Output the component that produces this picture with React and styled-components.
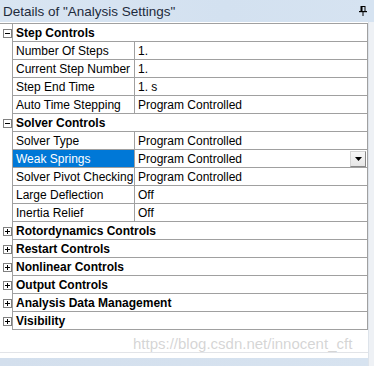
import React from "react";
import styled, { createGlobalStyle } from "styled-components";

const GlobalStyle = createGlobalStyle`
  html, body {
    margin: 0;
    padding: 0;
    background: #ffffff;
  }
  body {
    font-family: "Liberation Sans", Arial, sans-serif;
  }
`;

const Panel = styled.div`
  position: relative;
  width: 374px;
  height: 366px;
  display: flex;
  flex-direction: column;
  background: #ffffff;
  overflow: hidden;
`;

const Header = styled.div`
  height: 22px;
  display: flex;
  align-items: center;
  justify-content: space-between;
  padding: 0 7px 0 3px;
  background: linear-gradient(to right, #d9e5f2, #d3e1f0 60%, #d6e3f1);
  color: #1e2b3c;
  font-size: 13.5px;
  box-sizing: border-box;
`;

const Body = styled.div`
  display: flex;
  flex: 1;
  min-height: 0;
`;

const Main = styled.div`
  flex: 1;
  display: flex;
  flex-direction: column;
`;

const Strip = styled.div`
  width: 5px;
  background: #eef1f5;
  border-left: 1px solid #dde3ea;
`;

const Table = styled.div`
  margin-top: 1px;
  border-top: 1px solid #a0a0a0;
  border-right: 1px solid #a0a0a0;
  display: flex;
  flex-direction: column;
`;

const Row = styled.div`
  display: grid;
  grid-template-columns: 13px ${(p) => (p.$section ? "1fr" : "122px 1fr")};
  height: 18px;
`;

const Gutter = styled.div`
  display: flex;
  align-items: center;
  justify-content: flex-start;
  padding-left: 3px;
  border-right: 1px solid #a0a0a0;
`;

const Box = styled.div`
  width: 7px;
  height: 7px;
  border: 1px solid #808080;
  background: #ffffff;
  position: relative;
  &::before {
    content: "";
    position: absolute;
    left: 1px;
    right: 1px;
    top: 3px;
    height: 1px;
    background: #000;
  }
  &::after {
    content: "";
    display: ${(p) => (p.$open ? "none" : "block")};
    position: absolute;
    top: 1px;
    bottom: 1px;
    left: 3px;
    width: 1px;
    background: #000;
  }
`;

const Cell = styled.div`
  display: flex;
  align-items: center;
  position: relative;
  padding-left: 3px;
  border-bottom: 1px solid #a0a0a0;
  border-right: ${(p) => (p.$label ? "1px solid #a0a0a0" : "none")};
  background: ${(p) => (p.$selected ? "#0078d7" : "transparent")};
  color: ${(p) => (p.$selected ? "#ffffff" : "#000000")};
  font-size: 12px;
  font-weight: ${(p) => (p.$bold ? "bold" : "normal")};
  white-space: nowrap;
  overflow: hidden;
`;

const DropButton = styled.div`
  position: absolute;
  right: 1px;
  top: 1px;
  width: 14px;
  height: 14px;
  background: linear-gradient(#f7f7f7, #e6e6e6);
  border: 1px solid #d4d4d4;
  border-right-color: #888;
  border-bottom-color: #888;
  display: flex;
  align-items: center;
  justify-content: center;
`;

const Footer = styled.div`
  margin-top: auto;
  height: 13px;
  border-top: 1px solid #e2e4e8;
  display: flex;
  flex-direction: column;
  justify-content: flex-end;
`;

const BottomBar = styled.div`
  height: 8px;
  background: linear-gradient(to right, #d3dfed, #d7e3f0);
`;

const Watermark = styled.div`
  position: absolute;
  left: 133px;
  top: 335px;
  font-size: 15px;
  color: rgba(185, 185, 185, 0.6);
  pointer-events: none;
  white-space: nowrap;
`;

const PinIcon = () => (
  <svg width="8" height="10" viewBox="0 0 8 10">
    <rect x="2" y="0.5" width="4" height="5" fill="none" stroke="#000" />
    <rect x="2" y="0" width="1.5" height="6" fill="#000" />
    <rect x="0" y="5" width="8" height="1.2" fill="#000" />
    <rect x="3.5" y="6" width="1" height="4" fill="#000" />
  </svg>
);

const sections = [
  {
    title: "Step Controls",
    open: true,
    rows: [
      ["Number Of Steps", "1."],
      ["Current Step Number", "1."],
      ["Step End Time", "1. s"],
      ["Auto Time Stepping", "Program Controlled"],
    ],
  },
  {
    title: "Solver Controls",
    open: true,
    rows: [
      ["Solver Type", "Program Controlled"],
      ["Weak Springs", "Program Controlled", true],
      ["Solver Pivot Checking", "Program Controlled"],
      ["Large Deflection", "Off"],
      ["Inertia Relief", "Off"],
    ],
  },
  { title: "Rotordynamics Controls" },
  { title: "Restart Controls" },
  { title: "Nonlinear Controls" },
  { title: "Output Controls" },
  { title: "Analysis Data Management" },
  { title: "Visibility" },
];

export default function App() {
  return (
    <>
      <GlobalStyle />
      <Panel>
        <Header>
          <span>Details of "Analysis Settings"</span>
          <PinIcon />
        </Header>
        <Body>
          <Main>
            <Table>
              {sections.map((s) => (
                <React.Fragment key={s.title}>
                  <Row $section>
                    <Gutter>
                      <Box $open={s.open} />
                    </Gutter>
                    <Cell $bold>{s.title}</Cell>
                  </Row>
                  {(s.rows || []).map(([label, value, selected]) => (
                    <Row key={label}>
                      <Gutter />
                      <Cell $label $selected={selected}>
                        {label}
                      </Cell>
                      <Cell>
                        {value}
                        {selected && (
                          <DropButton>
                            <svg width="7" height="4" viewBox="0 0 7 4">
                              <path d="M0 0 H7 L3.5 4 Z" fill="#000" />
                            </svg>
                          </DropButton>
                        )}
                      </Cell>
                    </Row>
                  ))}
                </React.Fragment>
              ))}
            </Table>
            <Footer>
              <BottomBar />
            </Footer>
          </Main>
          <Strip />
        </Body>
        <Watermark>https://blog.csdn.net/innocent_cft</Watermark>
      </Panel>
    </>
  );
}
